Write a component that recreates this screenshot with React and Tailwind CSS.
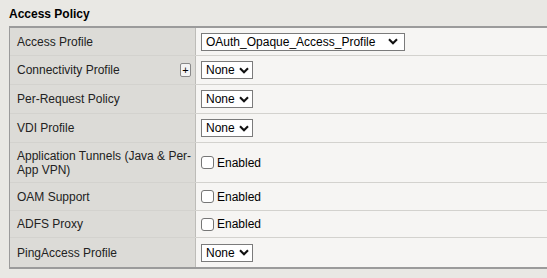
import React from "react";

const Chevron = () => (
  <svg width="10" height="7" viewBox="0 0 10 7" className="ml-[4px] shrink-0">
    <path d="M1 1.3 L5 5.3 L9 1.3" fill="none" stroke="#111" strokeWidth="2.1" />
  </svg>
);

const Select = ({ value, wide }) => (
  <div
    className={`flex items-center h-[18px] border border-[#7b7b7b] bg-white pl-[4px] text-[12px] text-black leading-none ${
      wide ? "w-[204px] justify-between pr-[6px]" : "w-[52px] pr-[3px]"
    }`}
  >
    <span className="whitespace-nowrap">{value}</span>
    <Chevron />
  </div>
);

const Check = () => (
  <div className="flex items-center text-[12px] text-black">
    <div className="w-[13px] h-[13px] border border-[#767676] rounded-[3px] bg-white mr-[3px]" />
    <span>Enabled</span>
  </div>
);

const rows = [
  { label: "Access Profile", h: "h-[28px]", v: <Select value="OAuth_Opaque_Access_Profile" wide /> },
  { label: "Connectivity Profile", h: "h-[29px]", plus: true, v: <Select value="None" /> },
  { label: "Per-Request Policy", h: "h-[29px]", v: <Select value="None" /> },
  { label: "VDI Profile", h: "h-[29px]", v: <Select value="None" /> },
  {
    label: (
      <>
        Application Tunnels (Java &amp; Per-
        <br />
        App VPN)
      </>
    ),
    h: "h-[40px]",
    v: <Check />,
  },
  { label: "OAM Support", h: "h-[28px]", v: <Check /> },
  { label: "ADFS Proxy", h: "h-[27px]", v: <Check /> },
  { label: "PingAccess Profile", h: "h-[29px]", v: <Select value="None" /> },
];

export default function App() {
  return (
    <div
      className="w-[547px] h-[278px] bg-[#e9e8e4] overflow-hidden"
      style={{ fontFamily: '"Liberation Sans", Arial, sans-serif' }}
    >
      <div className="pl-[9px] pt-[7px] h-[26px] text-[12px] font-bold text-black leading-[14px]">
        Access Policy
      </div>
      <div className="ml-[9px] border-t-2 border-b-2 border-l border-[#9b9b9b]">
        {rows.map((r, i) => (
          <div
            key={i}
            className={`grid grid-cols-[186px_1fr] ${r.h} ${
              i < rows.length - 1 ? "border-b border-[#d3d2ce]" : ""
            }`}
          >
            <div className="bg-[#dcdbd7] border-r border-[#bdbcb8] flex items-center justify-between pl-[7px] pr-[4px] text-[12px] text-[#222] leading-[14px]">
              <span className="whitespace-nowrap">{r.label}</span>
              {r.plus && (
                <div className="w-[11px] h-[14px] border border-[#888] rounded-[2px] bg-[#f4f4f4] flex items-center justify-center text-[11px] leading-none text-black">
                  +
                </div>
              )}
            </div>
            <div className="bg-[#f6f5f3] flex items-center pl-[5px]">{r.v}</div>
          </div>
        ))}
      </div>
    </div>
  );
}
